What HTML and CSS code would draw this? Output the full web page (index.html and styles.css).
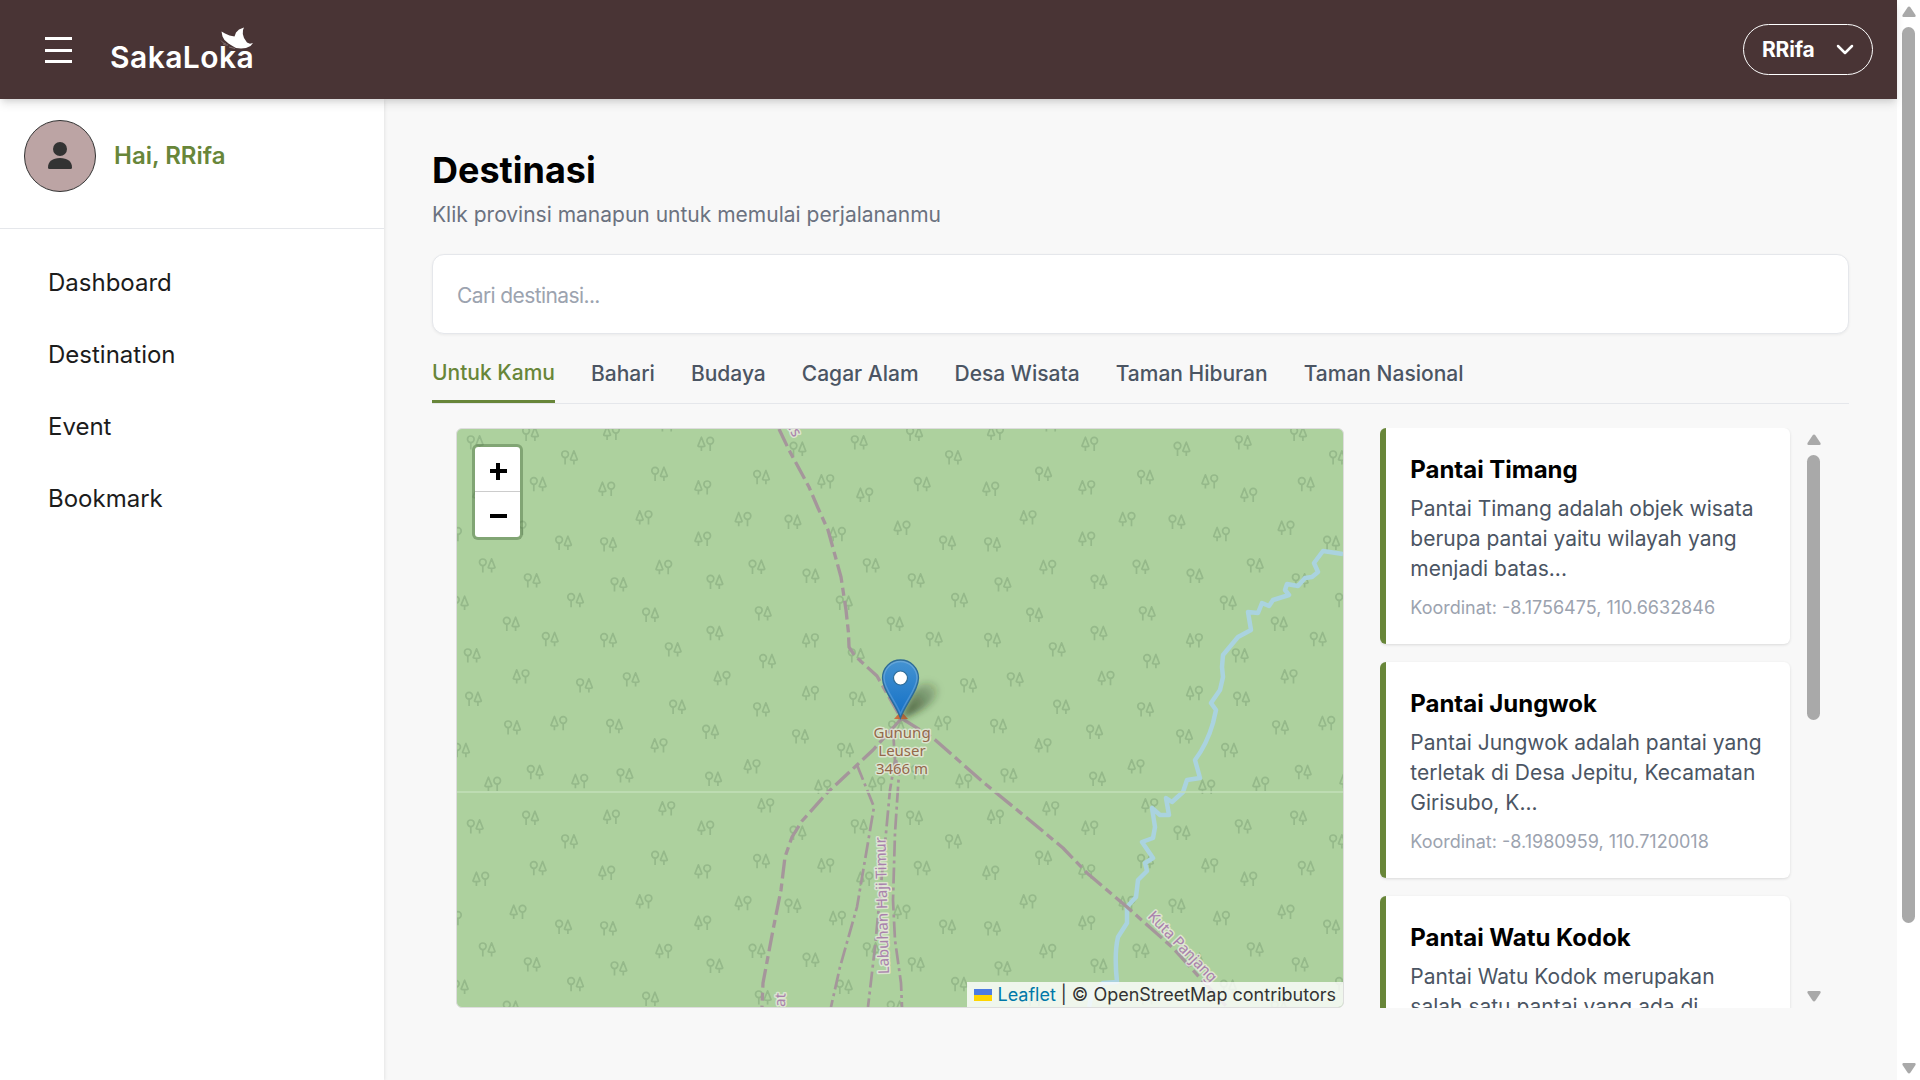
FILE: index.html
```html
<!DOCTYPE html>
<html lang="id">
<head>
<meta charset="utf-8">
<title>SakaLoka</title>
<link rel="stylesheet" href="styles.css">
</head>
<body>
<div class="page">
  <header class="topbar">
    <button class="menu-btn" aria-label="Menu"><span></span><span></span><span></span></button>
    <div class="brand"><span class="brand-name">SakaLoka</span>
      <svg class="bird" viewBox="0 0 34 24"><path d="M1.500 4.500L5 6.500 9.500 8.500 14.500 9.500 16 5.500 19 2.500 24 .5 23 3 22.800 7 24 11 27 15.500 30 16.800 33 16 30.500 19 26 21 21 21.500 16 21 12.500 19 8.500 16.500 4.500 13 2.500 9.500z"/><path class="tail" d="M1 13.500q2 3 5 3.500M3 17q2 1.500 5 1M9 20l6 1.500"/></svg>
    </div>
    <button class="user-btn"><span>RRifa</span>
      <svg width="18" height="11" viewBox="0 0 18 11"><path d="M2 2l7 7 7-7"/></svg>
    </button>
  </header>
  <div class="body">
    <aside class="sidebar">
      <div class="profile">
        <div class="avatar"><svg width="24" height="28" viewBox="0 0 24 28"><circle cx="12" cy="7" r="7"/><path d="M0 25.500C0 19.500 4.500 16 12 16s12 3.500 12 9.500q0 1.500-1.500 1.500h-21Q0 27 0 25.500z"/></svg></div>
        <span class="hello">Hai, RRifa</span>
      </div>
      <nav class="menu"><a>Dashboard</a><a>Destination</a><a>Event</a><a>Bookmark</a></nav>
    </aside>
    <main class="main">
      <h1>Destinasi</h1>
      <p class="sub">Klik provinsi manapun untuk memulai perjalananmu</p>
      <div class="search">Cari destinasi...</div>
      <div class="tabs">
        <a class="tab active">Untuk Kamu</a><a class="tab">Bahari</a><a class="tab">Budaya</a><a class="tab">Cagar Alam</a><a class="tab">Desa Wisata</a><a class="tab">Taman Hiburan</a><a class="tab">Taman Nasional</a>
      </div>
      <div class="content">
        <div class="map">
          <svg class="tiles" width="886" height="578" viewBox="0 0 886 578">
            <defs>
              <g id="a"><circle cx="-4.200" cy="-3" r="3.300"/><path d="M-4.200 .3V7.300M4.600-6.500L1.200 2.200Q1.200 3 4.600 3T8 2.200ZM4.600 3V7.300"/></g>
              <g id="b"><circle cx="4.200" cy="-3" r="3.300"/><path d="M4.200 .3V7.300M-4.600-6.500L-8 2.200Q-8 3-4.600 3T-1.200 2.200ZM-4.600 3V7.300"/></g>
              <g id="wood"></g>
              <linearGradient id="pin" x1="0" y1="0" x2="0" y2="1"><stop offset="0" stop-color="#4593d1"/><stop offset="1" stop-color="#126fc6"/></linearGradient>
              <linearGradient id="shade" x1="0" y1="1" x2="1" y2="0"><stop offset="0" stop-color="#203018" stop-opacity=".8"/><stop offset="1" stop-color="#203018" stop-opacity=".1"/></linearGradient>
              <filter id="soft" x="-50%" y="-50%" width="200%" height="200%"><feGaussianBlur stdDeviation="3.500"/></filter>
            </defs>
            <g id="forest" class="trees"></g>
            <path class="river" d="M886 125L866 122 857 134 861 143 855 148 848 149 841 157 830 155 828 161 832 166 816 171 812 177 805 174 801 184 791 183 794 201 781 208 766 226 765 238 766 248 763 261 754 274 759 281 756 294Q750 315 738 331L743 349 730 351 726 363 715 373 709 369 712 386 703 386 695 379 698 398 696 409 685 413 696 429 688 434 690 442 681 451 679 468 670 478V494L661 508Q657 525 660 553L646 554 635 564 632 578"/>
            <g class="border">
              <path d="M322 0L332 21 352 58 361 79 371 101 384 148 389 181 391.500 204 392 218 398 227 420 247 444 289" stroke-dasharray="19 5 8 5"/>
              <path d="M444 290L416 321 400 336 371 363 345 392 335 408 328 428 324 461 316 501 306 554 305 578" stroke-dasharray="19 5 8 5"/>
              <path d="M444 289L476 309 526 353 576 394 606 419 630 444 670 478 716 519 743 549 770 578" stroke-dasharray="22 5 8 5"/>
            </g>
            <g class="border thin">
              <path d="M400 336L417 378 408 431 400 478 383 538 374 578"/>
              <path d="M436 301L438 331 433 361 429 404 418 518 411 578"/>
              <path d="M439 331L442 344 438 404 436 471 438 511 444 554 445 578"/>
            </g>
            <path class="seam" d="M0 363H886"/>
            <path d="M444 282l7 8h-14z" fill="#cf7240"/>
            <g class="peak"><text x="445" y="308.500">Gunung</text><text x="445" y="326.500">Leuser</text><text x="445" y="344.500">3466 m</text></g>
            <g class="district">
              <text transform="translate(432 545) rotate(-91.500)" textLength="137">Labuhan Haji Timur</text>
              <text transform="translate(690 488) rotate(46)" textLength="92">Kuta Panjang</text>
              <text transform="translate(328 578) rotate(-88)">at</text>
              <text transform="translate(329 -5) rotate(62)">es</text>
            </g>
            <path d="M444 290L455 265Q466 248 479 256Q486 268 462 282z" fill="url(#shade)" filter="url(#soft)"/>
            <path d="M443.500 289C438 274 425.500 261 425.500 249a18 18 0 0 1 36 0C461.500 261 449 274 443.500 289z" fill="url(#pin)" stroke="#2e6c97" stroke-width="1.300"/>
            <path d="M443.500 285C438 271 427 260 427 249a16.500 16.500 0 0 1 33 0C460 260 449 271 443.500 285z" fill="none" stroke="#fff" stroke-opacity=".18" stroke-width="1.500"/>
            <circle cx="443.500" cy="249" r="7" fill="#fff" stroke="#2e6c97" stroke-width="1.200"/>
          </svg>
          <div class="zoom"><span class="plus"></span><span class="minus"></span></div>
          <div class="credit"><svg width="18" height="12" viewBox="0 0 18 12"><path fill="#4c7be1" d="M0 0h18v6H0z"/><path fill="#ffd500" d="M0 6h18v6H0z"/></svg><a>Leaflet</a><span>|</span><span>© OpenStreetMap contributors</span></div>
        </div>
        <div class="list">
          <div class="cards">
            <article class="card"><h2>Pantai Timang</h2><p>Pantai Timang adalah objek wisata<br>berupa pantai yaitu wilayah yang<br>menjadi batas...</p><small>Koordinat: -8.1756475, 110.6632846</small></article>
            <article class="card"><h2>Pantai Jungwok</h2><p>Pantai Jungwok adalah pantai yang<br>terletak di Desa Jepitu, Kecamatan<br>Girisubo, K...</p><small>Koordinat: -8.1980959, 110.7120018</small></article>
            <article class="card"><h2>Pantai Watu Kodok</h2><p>Pantai Watu Kodok merupakan<br>salah satu pantai yang ada di</p></article>
          </div>
          <div class="scroll inner"><svg width="14" height="11" viewBox="0 0 14 11"><path d="M5.500 1.500Q7-.5 8.500 1.500L13.500 9Q14 11 12.500 11h-11Q0 11 .5 9z"/></svg><i class="thumb"></i><svg class="down" width="14" height="11" viewBox="0 0 14 11"><path d="M5.500 1.500Q7-.5 8.500 1.500L13.500 9Q14 11 12.500 11h-11Q0 11 .5 9z"/></svg></div>
        </div>
      </div>
    </main>
  </div>
</div>
<div class="scroll outer"><svg width="14" height="11" viewBox="0 0 14 11"><path d="M5.500 1.500Q7-.5 8.500 1.500L13.500 9Q14 11 12.500 11h-11Q0 11 .5 9z"/></svg><i class="thumb"></i><svg class="down" width="14" height="11" viewBox="0 0 14 11"><path d="M5.500 1.500Q7-.5 8.500 1.500L13.500 9Q14 11 12.500 11h-11Q0 11 .5 9z"/></svg></div>
<script src="map.js"></script>
</body>
</html>
```
FILE: styles.css
```css
* { box-sizing: border-box; margin: 0; padding: 0; }
body { display: flex; width: 1920px; height: 1080px; overflow: hidden; background: #fff; font-family: Inter, sans-serif; color: #000; }
button { border: 0; background: none; font: inherit; color: inherit; }
.page { width: 1897px; height: 1080px; display: flex; flex-direction: column; background: #f8f8f8; }
.topbar { position: relative; z-index: 2; height: 99px; flex: none; display: flex; align-items: center; padding: 0 24px 0 45px; background: #493435; color: #fff; box-shadow: 0 6px 9px -1px rgba(0,0,0,.1), 0 3px 6px -2px rgba(0,0,0,.1); }
.menu-btn { width: 27px; height: 26px; display: flex; flex-direction: column; justify-content: space-between; margin: 1px 38px 0 0; }
.menu-btn span { height: 3px; background: #fff; }
.brand { position: relative; }
.brand-name { display: block; font-size: 30px; font-weight: 600; line-height: 36px; margin-top: 14px; letter-spacing: .45px; }
.bird { position: absolute; left: 110px; top: 2px; width: 34px; height: 24px; fill: #fff; overflow: visible; }
.bird .tail { fill: none; stroke: #8d7c7d; stroke-width: .8; }
.user-btn { margin-left: auto; width: 130px; height: 51px; border: 1px solid #fff; border-radius: 26px; display: flex; align-items: center; justify-content: space-between; padding: 0 18px; font-size: 21px; font-weight: 700; letter-spacing: -.2px; }
.user-btn svg { fill: none; stroke: #fff; stroke-width: 2.500; stroke-linecap: round; stroke-linejoin: round; }
.body { flex: 1; display: flex; min-height: 0; }
.sidebar { width: 384px; background: #fff; box-shadow: 0 1px 4px rgba(0,0,0,.12); }
.profile { height: 130px; border-bottom: 1px solid #e5e7eb; display: flex; align-items: flex-start; gap: 18px; padding: 21px 24px 0; }
.avatar { width: 72px; height: 72px; border: 1px solid #333; border-radius: 50%; background: #bca4a4; display: flex; align-items: center; justify-content: center; }
.avatar svg { fill: #333; }
.hello { line-height: 72px; font-size: 24px; font-weight: 600; color: #688639; }
.menu { display: flex; flex-direction: column; padding: 18px 48px; }
.menu a { height: 72px; line-height: 72px; font-size: 24px; color: #1c1c1c; }
.main { flex: 1; padding: 49px 48px 0; }
h1 { font-size: 36px; font-weight: 700; line-height: 44px; }
.sub { margin-top: 8px; font-size: 21px; line-height: 30px; color: #6b7280; }
.search { margin-top: 24px; height: 80px; border: 1px solid #e5e7eb; border-radius: 12px; background: #fff; box-shadow: 0 1px 3px rgba(0,0,0,.06); padding: 0 24px; line-height: 82px; font-size: 21px; color: #9ca3af; letter-spacing: -.6px; }
.tabs { display: flex; gap: 36px; height: 70px; border-bottom: 1px solid #e5e7eb; font-size: 21px; font-weight: 500; color: #4b5563; }
.tab { line-height: 80px; height: 69px; white-space: nowrap; }
.tab.active { color: #688639; border-bottom: 3px solid #688639; line-height: 78px; }
.content { display: flex; gap: 36px; margin: 24px 24px 0; }
.map { position: relative; width: 888px; height: 580px; border: 1px solid #ddd; border-radius: 6px; overflow: hidden; background: #add19e; flex: none; }
.tiles { display: block; }
.trees { fill: none; stroke: #95b98a; stroke-width: 1.700; stroke-linejoin: round; }
.river { fill: none; stroke: #aad3df; stroke-width: 4.500; stroke-linejoin: round; }
.border { fill: none; stroke: #a5969b; stroke-width: 3.300; stroke-linejoin: round; }
.thin { stroke-width: 2.700; stroke-dasharray: 16 4 3 4; }
.seam { stroke: #c3dfb8; stroke-width: 1.500; }
.peak, .district { font-family: "Noto Sans", sans-serif; font-size: 15px; font-weight: 400; paint-order: stroke; stroke: rgba(240,238,230,.7); stroke-width: 3px; stroke-linejoin: round; }
.peak { fill: #94694b; text-anchor: middle; }
.district { fill: #a981ac; }
.zoom { position: absolute; left: 15px; top: 15px; width: 51px; height: 96px; border: 3px solid rgba(75,110,65,.45); border-radius: 6px; background: #fff; background-clip: padding-box; display: flex; flex-direction: column; }
.zoom span { height: 45px; background: linear-gradient(#000,#000) 15px 22px / 17px 4px no-repeat; }
.zoom .plus { border-bottom: 1px solid #ccc; background: linear-gradient(#000,#000) 15px 22px / 17px 4px no-repeat, linear-gradient(#000,#000) 21px 16px / 4px 17px no-repeat; }
.credit { position: absolute; right: 0; bottom: 0; height: 25px; display: flex; align-items: center; gap: 5px; padding: 0 7px; background: rgba(255,255,255,.8); font-size: 18px; color: #333; white-space: nowrap; }
.credit svg { margin-right: 1px; }
.credit a { color: #0078a8; }
.list { display: flex; height: 580px; flex: 1; overflow: hidden; justify-content: space-between; }
.cards { width: 410px; display: flex; flex-direction: column; gap: 18px; }
.card { height: 216px; flex: none; border-left: 6px solid #688639; border-radius: 6px; background: #fff; box-shadow: 0 1px 3px rgba(0,0,0,.12); padding: 24px 0 0 24.300px; white-space: nowrap; }
h2 { font-size: 24px; font-weight: 700; line-height: 36px; letter-spacing: -.02px; }
.card p { margin-top: 6px; font-size: 21px; line-height: 30px; color: #4b5563; }
.card small { display: block; margin-top: 12px; font-size: 18px; line-height: 24px; color: #9ca3af; }
.scroll { display: flex; flex-direction: column; align-items: center; }
.scroll svg { fill: #a9a9a9; flex: none; }
.scroll .down { transform: rotate(180deg); margin-top: auto; }
.thumb { width: 13px; border-radius: 7px; background: #a9a9a9; }
.inner { width: 23px; padding: 6px 0; margin-right: 0; }
.inner .thumb { height: 265px; margin-top: 10px; }
.outer { width: 23px; height: 1080px; padding: 6px 0; background: #fff; }
.outer .thumb { height: 896px; margin-top: 10px; }
```
FILE: map.js
```js
// Tree symbols of one 384px forest tile, repeated over the whole map.
const roundLeft = [[18,13.3],[73.3,4.7],[340.7,19.7],[112.3,28.3],[202.3,44.7],[304.3,48],[81,55],[335.7,92.7],[106.3,113.7],[151.3,115.3],[30,136.3],[299.7,137.7],[75,151.3],[161.7,155.3],[257.7,152.7],[353.7,146.7],[3,173.7],[118.3,171],[193.3,185.7],[306,184.3],[54,194.7],[93,210],[151.3,211],[257.7,204],[15,226.3],[216,220.3],[310.3,232],[127.3,256.3],[174,250.3],[16.3,269.7],[220.3,277.7],[304.3,280.3],[55.3,298.3],[157.3,297],[253.3,302.7],[343.3,307.3],[4.3,321],[78,343],[167.7,346.3],[256.3,349.7]];
const pineLeft = [[154.7,3.7],[249,14.7],[369,52.3],[150,59.7],[246,58.3],[24,65.7],[187.3,88.3],[286.3,90],[380.7,105],[61.3,98.7],[246,109.7],[207,138],[353.7,211.3],[64.3,247.3],[265.3,249],[353.7,264],[102,294],[202.3,316.3],[36,354.7],[123,352],[295.3,337.3],[366,357.7],[210,379.3],[309,376.3]];
const use = (id, x, y) => `<use href="#${id}" x="${x}" y="${y}"/>`;
document.getElementById('wood').innerHTML =
  roundLeft.map(([x, y]) => use('a', x, y)).join('') + pineLeft.map(([x, y]) => use('b', x, y)).join('');
let tiles = '';
for (let x = -384; x < 886; x += 384) for (let y = -384; y < 578; y += 384) tiles += use('wood', x, y);
document.getElementById('forest').innerHTML = tiles;
```
